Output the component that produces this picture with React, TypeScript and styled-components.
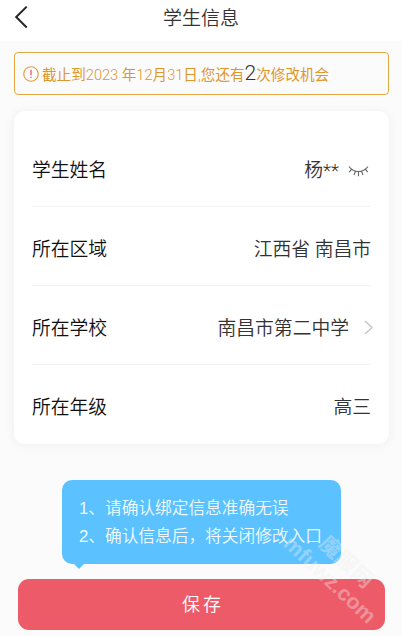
import React from "react";
import styled, { createGlobalStyle } from "styled-components";

const Global = createGlobalStyle`
  * { box-sizing: border-box; }
  body { margin: 0; background: #fbfbfb; font-family: Roboto, "Noto Sans CJK SC", sans-serif; overflow: hidden; }
`;

const Screen = styled.div`
  width: 402px;
  height: 636px;
  display: flex;
  flex-direction: column;
  background: #fbfbfb;
  position: relative;
  overflow: hidden;
  font-weight: 350;
`;

const Header = styled.header`
  height: 41px;
  flex: none;
  background: #fff;
  display: grid;
  grid-template-columns: 44px 1fr 44px;
  padding-bottom: 8px;
  align-items: center;
`;

const BackIcon = styled.svg`
  width: 14px;
  height: 24px;
  margin-left: 14px;
`;

const Title = styled.h1`
  margin: 0;
  padding-top: 5px;
  font-size: 19px;
  line-height: 28px;
  font-weight: 350;
  color: #333;
  text-align: center;
`;

const Notice = styled.div`
  height: 43px;
  flex: none;
  margin: 11px 13px 0 14px;
  padding: 0 9px 0 8px;
  border: 1.5px solid #e2a845;
  border-radius: 4px;
  display: flex;
  align-items: center;
  gap: 3px;
  color: #df962b;
  font-size: 14.6px;
  font-weight: 400;
  white-space: nowrap;
`;

const AlertIcon = styled.svg`
  width: 16px;
  height: 16px;
  flex: none;
`;

const NoticeText = styled.span`
  line-height: 20px;
`;

const Light = styled.span`
  font-weight: 300;
`;

const Count = styled(Light)`
  font-size: 21px;
  line-height: 20px;
  color: #333;
`;

const Card = styled.section`
  margin: 16px 13px 0 14px;
  height: 333px;
  flex: none;
  padding: 17px 18px 0;
  background: #fff;
  border-radius: 11px;
  box-shadow: 0 1px 12px rgba(0, 0, 0, 0.055);
`;

const Row = styled.div<{ $last?: boolean }>`
  height: 79px;
  padding-top: 8px;
  display: flex;
  align-items: center;
  justify-content: space-between;
  border-bottom: 1px solid ${(p) => (p.$last ? "transparent" : "#f4f4f4")};
  font-size: 18.8px;
  line-height: 28px;
`;

const Label = styled.span`
  color: #111;
`;

const Value = styled.span<{ $inset?: number }>`
  display: flex;
  align-items: center;
  color: #333;
  margin-right: ${(p) => p.$inset ?? 0}px;
`;

const EyeIcon = styled.svg`
  width: 21px;
  height: 13px;
  margin-left: 9px;
`;

const ChevronIcon = styled.svg`
  width: 9px;
  height: 15px;
  margin: -3px 0 0 15px;
`;

const Tip = styled.div`
  position: relative;
  flex: none;
  margin: 36px 0 0 62px;
  width: 279px;
  height: 84px;
  padding: 15px 17px 13px;
  border-radius: 10px;
  background: #5bc2ff;
  color: #effaff;
  font-family: "Liberation Sans", "Noto Sans CJK SC", sans-serif;
  font-size: 16.7px;
  line-height: 28px;
  white-space: nowrap;
`;

const TipArrow = styled.span`
  position: absolute;
  left: 11px;
  top: 83px;
  border: 6px solid transparent;
  border-top-color: #5bc2ff;
  border-bottom: 0;
`;

const SaveButton = styled.button`
  flex: none;
  margin: 15px 17px 0 18px;
  height: 51px;
  padding: 0 0 4px 3px;
  border: 0;
  border-radius: 11px;
  background: #ed5b68;
  color: #fff;
  font: 350 18px/46px "Noto Sans CJK SC", sans-serif;
  letter-spacing: 3px;
`;

const Watermark = styled.div`
  position: absolute;
  left: 268px;
  top: 547px;
  width: 140px;
  transform: rotate(43deg);
  color: rgba(238, 238, 240, 0.38);
  font: 700 21.5px/24px "Liberation Sans", "Noto Sans CJK SC", sans-serif;
  text-align: center;
  pointer-events: none;
`;

export default function App() {
  return (
    <>
      <Global />
      <Screen>
        <Header>
          <BackIcon viewBox="0 0 14 24" fill="none" stroke="#252525" strokeWidth="2">
            <path d="M12.7 1.6 2.2 12l10.5 10.5" />
          </BackIcon>
          <Title>学生信息</Title>
        </Header>
        <Notice>
          <AlertIcon viewBox="0 0 15 15" fill="none">
            <circle cx="7.5" cy="7.5" r="6.8" stroke="#dfa044" strokeWidth="1.1" />
            <path d="M7.5 3.5v5.2M7.5 10v1.3" stroke="#e8506a" strokeWidth="1.2" />
          </AlertIcon>
          <NoticeText>
            截止到<Light>2023 </Light>年<Light>12</Light>月<Light>31</Light>日<Light>,</Light>您还有<Count>2</Count>次修改机会
          </NoticeText>
        </Notice>
        <Card>
          <Row>
            <Label>学生姓名</Label>
            <Value $inset={2}>
              杨<Light>**</Light>
              <EyeIcon viewBox="0 0 21 13" fill="none" stroke="#666" strokeWidth="1.1">
                <path d="M1 1.500c4.800 6.700 14.200 6.700 19 0M3.500 4.300 1.300 7.200M7.500 6.300 6 10M10.500 6.700v4.500M13.500 6.300 15 10M17.500 4.300l2.200 2.900" />
              </EyeIcon>
            </Value>
          </Row>
          <Row>
            <Label>所在区域</Label>
            <Value>江西省 南昌市</Value>
          </Row>
          <Row>
            <Label>所在学校</Label>
            <Value $inset={-2}>
              南昌市第二中学
              <ChevronIcon viewBox="0 0 9 15" fill="none" stroke="#c4c4c4" strokeWidth="1.3">
                <path d="m1 1 7 6.500L1 14" />
              </ChevronIcon>
            </Value>
          </Row>
          <Row $last>
            <Label>所在年级</Label>
            <Value>高三</Value>
          </Row>
        </Card>
        <Tip>
          <div>1、请确认绑定信息准确无误</div>
          <div>2、确认信息后，将关闭修改入口</div>
          <TipArrow />
        </Tip>
        <SaveButton>保存</SaveButton>
        <Watermark>
          <div>魔服网</div>
          <div>mfuwz.com</div>
        </Watermark>
      </Screen>
    </>
  );
}
